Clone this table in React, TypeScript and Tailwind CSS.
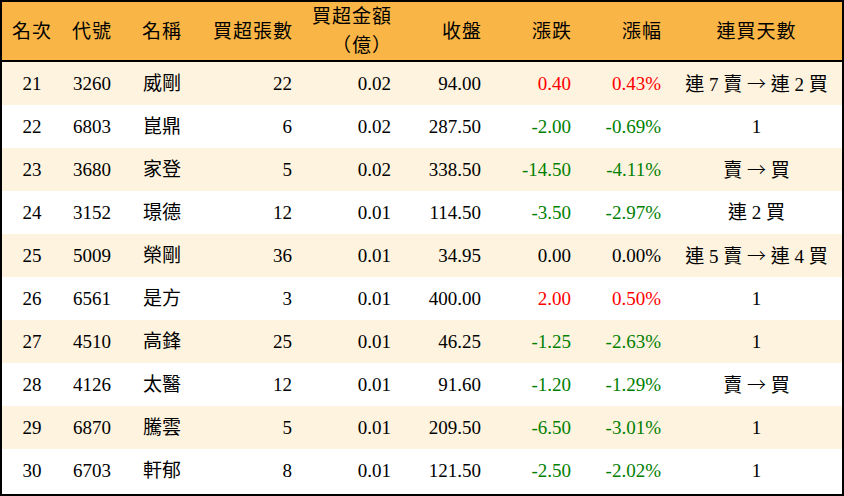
type Row = {
  rank: number;
  code: string;
  name: string;
  lots: number;
  amount: string;
  close: string;
  change: string;
  pct: string;
  streak: string;
};

const rows: Row[] = [
  { rank: 21, code: "3260", name: "威剛", lots: 22, amount: "0.02", close: "94.00", change: "0.40", pct: "0.43%", streak: "連 7 賣 → 連 2 買" },
  { rank: 22, code: "6803", name: "崑鼎", lots: 6, amount: "0.02", close: "287.50", change: "-2.00", pct: "-0.69%", streak: "1" },
  { rank: 23, code: "3680", name: "家登", lots: 5, amount: "0.02", close: "338.50", change: "-14.50", pct: "-4.11%", streak: "賣 → 買" },
  { rank: 24, code: "3152", name: "璟德", lots: 12, amount: "0.01", close: "114.50", change: "-3.50", pct: "-2.97%", streak: "連 2 買" },
  { rank: 25, code: "5009", name: "榮剛", lots: 36, amount: "0.01", close: "34.95", change: "0.00", pct: "0.00%", streak: "連 5 賣 → 連 4 買" },
  { rank: 26, code: "6561", name: "是方", lots: 3, amount: "0.01", close: "400.00", change: "2.00", pct: "0.50%", streak: "1" },
  { rank: 27, code: "4510", name: "高鋒", lots: 25, amount: "0.01", close: "46.25", change: "-1.25", pct: "-2.63%", streak: "1" },
  { rank: 28, code: "4126", name: "太醫", lots: 12, amount: "0.01", close: "91.60", change: "-1.20", pct: "-1.29%", streak: "賣 → 買" },
  { rank: 29, code: "6870", name: "騰雲", lots: 5, amount: "0.01", close: "209.50", change: "-6.50", pct: "-3.01%", streak: "1" },
  { rank: 30, code: "6703", name: "軒郁", lots: 8, amount: "0.01", close: "121.50", change: "-2.50", pct: "-2.02%", streak: "1" },
];

function tone(v: string) {
  if (v.startsWith("-")) return "text-[#008000]";
  if (parseFloat(v) > 0) return "text-[#ff0000]";
  return "text-black";
}

// the arrow in the streak column is the wide CJK one
function Streak({ text }: { text: string }) {
  const parts = text.split("→");
  return (
    <>
      {parts.map((p, i) => (
        <span key={i}>
          {i > 0 && (
            <span style={{ fontFamily: '"Noto Sans CJK TC", sans-serif' }} className="font-light">
              →
            </span>
          )}
          {p}
        </span>
      ))}
    </>
  );
}

export default function App() {
  return (
    <div
      className="w-[844px] h-[496px] bg-white border-2 border-black text-black text-[19px] leading-none"
      style={{ fontFamily: '"Liberation Serif", "Noto Sans CJK TC", serif' }}
    >
      <div className="flex h-[60px] items-center bg-[#f9b646] border-b-2 border-black tracking-[1px]">
        <div className="w-[60px] text-center">名次</div>
        <div className="w-[60px] text-center">代號</div>
        <div className="w-[80px] text-center">名稱</div>
        <div className="w-[100px] text-right pr-[9px]">買超張數</div>
        <div className="w-[99px] text-right pr-[9px] leading-[29px]">
          <div>買超金額</div>
          <div>（億）</div>
        </div>
        <div className="w-[90px] text-right pr-[9px]">收盤</div>
        <div className="w-[90px] text-right pr-[9px]">漲跌</div>
        <div className="w-[90px] text-right pr-[9px]">漲幅</div>
        <div className="flex-1 text-center">連買天數</div>
      </div>
      {rows.map((r, i) => (
        <div
          key={r.rank}
          className={`flex h-[43px] items-center ${i % 2 === 0 ? "bg-[#fef3df]" : "bg-white"}`}
        >
          <div className="w-[60px] text-center">{r.rank}</div>
          <div className="w-[60px] text-center">{r.code}</div>
          <div className="w-[80px] text-center">{r.name}</div>
          <div className="w-[100px] text-right pr-[10px]">{r.lots}</div>
          <div className="w-[99px] text-right pr-[10px]">{r.amount}</div>
          <div className="w-[90px] text-right pr-[10px]">{r.close}</div>
          <div className={`w-[90px] text-right pr-[10px] ${tone(r.change)}`}>{r.change}</div>
          <div className={`w-[90px] text-right pr-[10px] ${tone(r.change)}`}>{r.pct}</div>
          <div className="flex-1 text-center whitespace-pre">
            <Streak text={r.streak} />
          </div>
        </div>
      ))}
    </div>
  );
}
